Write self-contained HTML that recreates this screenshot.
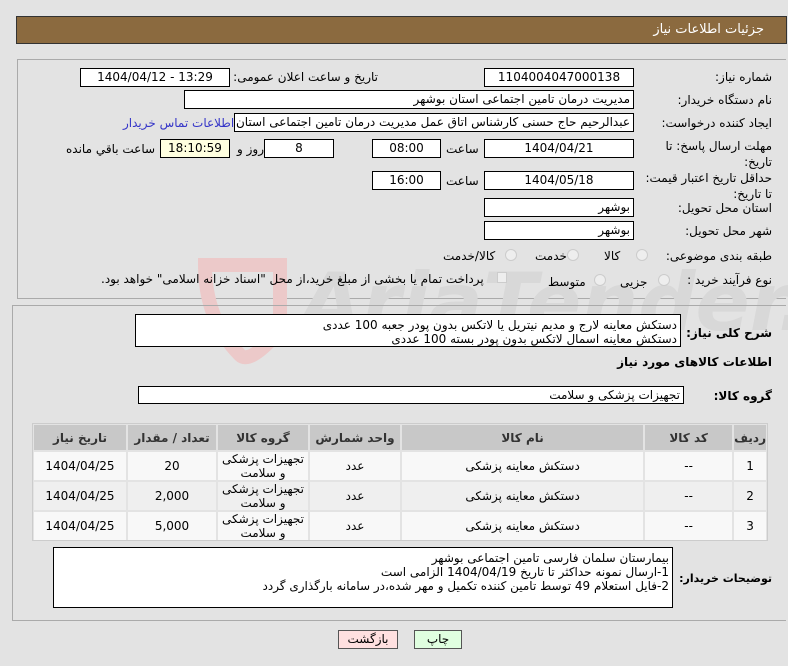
<!DOCTYPE html>
<html><head><meta charset="utf-8"><style>
*{box-sizing:border-box;margin:0;padding:0}
body{width:788px;height:666px;background:#e3e3e3;font-family:"DejaVu Sans","Liberation Sans",sans-serif;font-size:11px;color:#000;position:relative;overflow:hidden}
.a{position:absolute}
.box{position:absolute;background:#fff;border:1px solid #000;height:19px;line-height:17px;text-align:center;font-size:12px;white-space:nowrap;overflow:hidden}
.r{text-align:right;padding-right:3px;direction:rtl}
.lbl{position:absolute;direction:rtl;text-align:right;white-space:nowrap;font-size:12px}
.rad{position:absolute;width:12px;height:12px;border-radius:50%;border:1px solid #ccc;background:#eee}
table{border-collapse:separate;border-spacing:2px;position:absolute}
td,th{font-size:12px;text-align:center;direction:rtl}
th{background:#c8c8c8;height:25px;font-weight:bold;color:#333}
td{height:28px;line-height:14px}
</style></head><body>
<div class="a" style="left:16px;top:16px;width:771px;height:28px;background:#8b6a3f;border:1px solid #333"></div>
<div class="lbl" style="right:24px;top:22px;color:#fff;font-size:13px">جزئیات اطلاعات نیاز</div>

<div class="a" style="left:17px;top:59px;width:769px;height:240px;border:1px solid #aaa;border-right:none"></div>
<!-- watermark -->
<svg class="a" style="left:190px;top:250px" width="600" height="130">
<path d="M15 15 L90 15 L90 80 Q60 115 50 105 Q15 70 15 15Z" fill="none" stroke="#ecc9c9" stroke-width="14"/>
<text x="110" y="80" font-family="DejaVu Sans" font-weight="bold" font-size="80" fill="#d8d8d8" font-style="italic">AriaTender.net</text>
</svg>

<div class="lbl" style="right:16px;top:70px">شماره نیاز:</div>
<div class="box" style="left:484px;top:68px;width:150px">1104004047000138</div>
<div class="lbl" style="left:235px;top:70px;width:143px">تاریخ و ساعت اعلان عمومی:</div>
<div class="box" style="left:80px;top:68px;width:150px">1404/04/12 - 13:29</div>

<div class="lbl" style="right:16px;top:93px">نام دستگاه خریدار:</div>
<div class="box r" style="left:184px;top:90px;width:450px">مدیریت درمان تامین اجتماعی استان بوشهر</div>

<div class="lbl" style="right:16px;top:116px">ایجاد کننده درخواست:</div>
<div class="box r" style="left:234px;top:113px;width:400px">عبدالرحیم حاج حسنی کارشناس اتاق عمل مدیریت درمان تامین اجتماعی استان</div>
<div class="lbl" style="left:123px;top:116px;color:#3535c8">اطلاعات تماس خریدار</div>

<div class="lbl" style="right:16px;top:138px;line-height:16px">مهلت ارسال پاسخ: تا<br>تاریخ:</div>
<div class="box" style="left:484px;top:139px;width:150px">1404/04/21</div>
<div class="lbl" style="left:446px;top:142px">ساعت</div>
<div class="box" style="left:372px;top:139px;width:69px">08:00</div>
<div class="box" style="left:264px;top:139px;width:70px">8</div>
<div class="lbl" style="left:237px;top:142px">روز و</div>
<div class="box" style="left:160px;top:139px;width:70px;background:#ffffe0">18:10:59</div>
<div class="lbl" style="left:66px;top:142px">ساعت باقي مانده</div>

<div class="lbl" style="right:16px;top:170px;line-height:16px">حداقل تاریخ اعتبار قیمت:<br>تا تاریخ:</div>
<div class="box" style="left:484px;top:171px;width:150px">1404/05/18</div>
<div class="lbl" style="left:446px;top:174px">ساعت</div>
<div class="box" style="left:372px;top:171px;width:69px">16:00</div>

<div class="lbl" style="right:16px;top:201px">استان محل تحویل:</div>
<div class="box r" style="left:484px;top:198px;width:150px">بوشهر</div>
<div class="lbl" style="right:16px;top:224px">شهر محل تحویل:</div>
<div class="box r" style="left:484px;top:221px;width:150px">بوشهر</div>

<div class="lbl" style="right:16px;top:249px">طبقه بندی موضوعی:</div>
<div class="rad" style="left:636px;top:249px"></div><div class="lbl" style="left:604px;top:249px">کالا</div>
<div class="rad" style="left:567px;top:249px"></div><div class="lbl" style="left:535px;top:249px">خدمت</div>
<div class="rad" style="left:505px;top:249px"></div><div class="lbl" style="left:443px;top:249px">کالا/خدمت</div>

<div class="lbl" style="right:16px;top:273px">نوع فرآیند خرید :</div>
<div class="rad" style="left:658px;top:274px"></div><div class="lbl" style="left:620px;top:275px">جزیی</div>
<div class="rad" style="left:594px;top:274px"></div><div class="lbl" style="left:548px;top:275px">متوسط</div>
<div class="a" style="left:497px;top:272px;width:10px;height:11px;border:1px solid #ccc;background:#eee"></div>
<div class="lbl" style="left:101px;top:272px">پرداخت تمام یا بخشی از مبلغ خرید،از محل "اسناد خزانه اسلامی" خواهد بود.</div>

<div class="a" style="left:12px;top:305px;width:774px;height:316px;border:1px solid #aaa;border-right:none"></div>
<div class="lbl" style="right:16px;top:326px;font-weight:bold">شرح کلی نیاز:</div>
<div class="a" style="left:135px;top:314px;width:546px;height:33px;background:#fff;border:1px solid #000;direction:rtl;text-align:right;padding:3px 3px 0 0;font-size:12px;line-height:14px">دستکش معاینه لارج و مدیم نیتریل یا لاتکس بدون پودر جعبه 100 عددی<br>دستکش معاینه اسمال لاتکس بدون پودر بسته 100 عددی</div>
<div class="lbl" style="right:16px;top:355px;font-weight:bold">اطلاعات کالاهای مورد نیاز</div>
<div class="lbl" style="right:16px;top:389px;font-weight:bold">گروه کالا:</div>
<div class="box r" style="left:138px;top:386px;width:546px;height:18px;text-align:right">تجهیزات پزشکی و سلامت</div>

<div class="a" style="left:32px;top:423px;width:736px;height:118px;border:1px solid #ccc"></div>
<table style="left:32px;top:423px;width:736px;direction:rtl">
<tr><th style="width:26px">ردیف</th><th style="width:87px">کد کالا</th><th>نام کالا</th><th style="width:90px">واحد شمارش</th><th style="width:90px">گروه کالا</th><th style="width:88px">تعداد / مقدار</th><th style="width:92px">تاریخ نیاز</th></tr>
<tr style="background:#f8f8f8"><td>1</td><td>--</td><td>دستکش معاینه پزشکی</td><td>عدد</td><td>تجهیزات پزشکی و سلامت</td><td>20</td><td>1404/04/25</td></tr>
<tr style="background:#efefef"><td>2</td><td>--</td><td>دستکش معاینه پزشکی</td><td>عدد</td><td>تجهیزات پزشکی و سلامت</td><td>2,000</td><td>1404/04/25</td></tr>
<tr style="background:#f8f8f8"><td>3</td><td>--</td><td>دستکش معاینه پزشکی</td><td>عدد</td><td>تجهیزات پزشکی و سلامت</td><td>5,000</td><td>1404/04/25</td></tr>
</table>

<div class="lbl" style="right:16px;top:572px;font-weight:bold;font-size:11px">توضیحات خریدار:</div>
<div class="a" style="left:53px;top:547px;width:620px;height:61px;background:#fff;border:1px solid #000;direction:rtl;text-align:right;padding:3px 3px 0 0;font-size:12px;line-height:14px">بیمارستان سلمان فارسی تامین اجتماعی بوشهر<br>1-ارسال نمونه حداکثر تا تاریخ 1404/04/19 الزامی است<br>2-فایل استعلام 49 توسط تامین کننده تکمیل و مهر شده،در سامانه بارگذاری گردد</div>

<div class="a" style="left:338px;top:630px;width:60px;height:19px;background:#ffe0e0;border:1px solid #555;text-align:center;font-size:12px;line-height:17px">بازگشت</div>
<div class="a" style="left:414px;top:630px;width:48px;height:19px;background:#e0ffe0;border:1px solid #555;text-align:center;font-size:12px;line-height:17px">چاپ</div>
</body></html>
